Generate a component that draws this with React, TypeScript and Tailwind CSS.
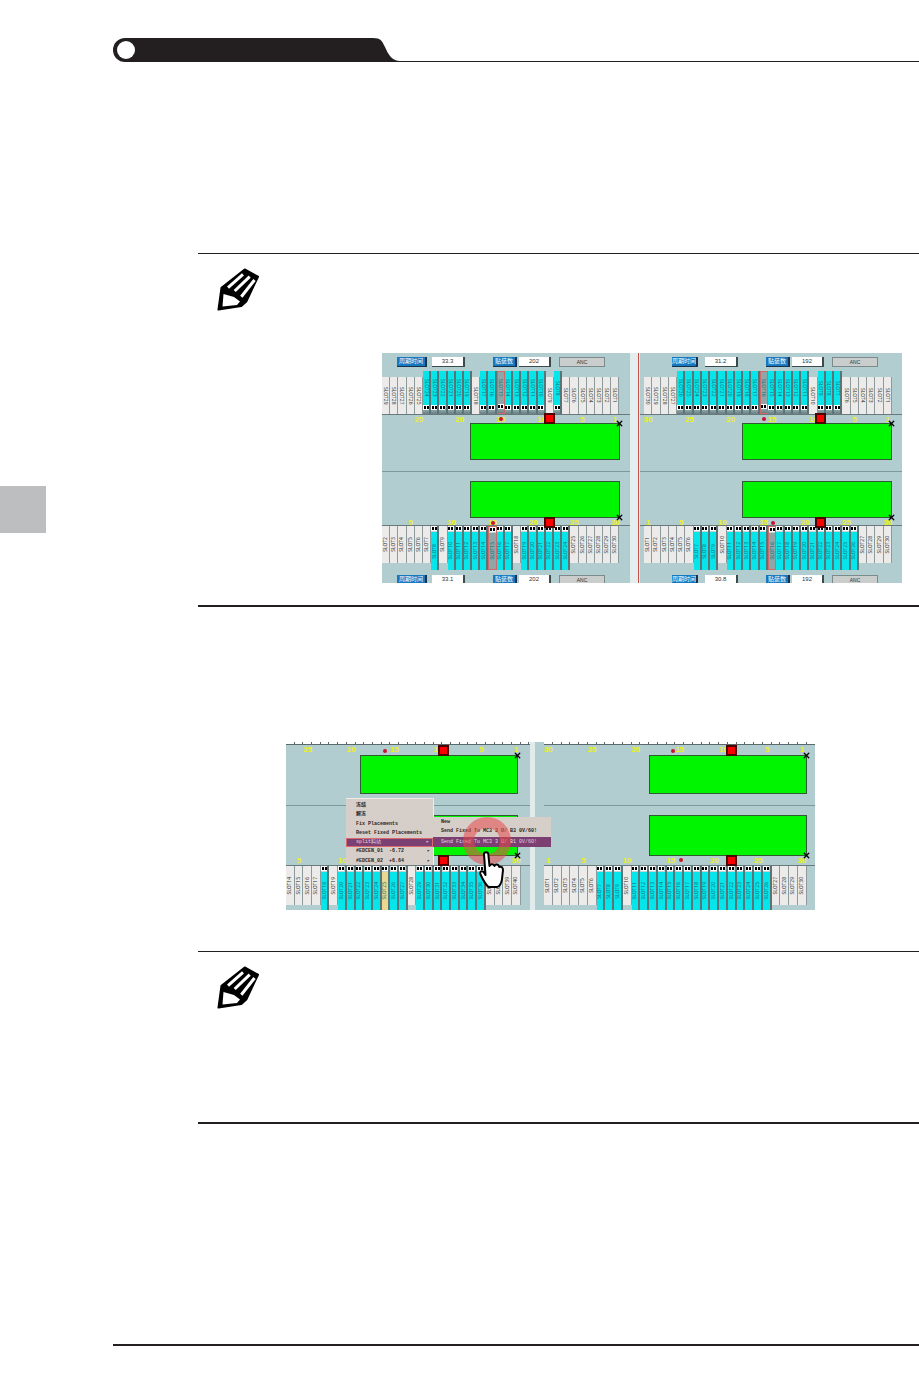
import React from 'react';
import { X } from 'lucide-react';

const CJK = "font-['Liberation_Sans','Noto_Sans_CJK_SC',sans-serif]";

// one feeder slot; top rows are flipped compared with bottom rows
const Slot: React.FC<{ kind: string; label: number; side: 'top' | 'bottom'; cell: string; tall?: boolean }> = ({ kind, label, side, cell, tall }) => {
  const isTop = side === 'top';
  const text = (
    <span className={`text-[5px] leading-none whitespace-nowrap ${kind === 'w' ? 'text-[#333]' : 'text-[#0a6f78]'} [writing-mode:vertical-rl] ${isTop ? '' : 'rotate-180'}`}>
      SLOT{label}
    </span>
  );

  if (kind === 'w') {
    return (
      <div className={`${cell} ${tall ? 'h-[39px]' : 'h-[37px]'} shrink-0 bg-[#ecebea] border-r border-[#8d9a9c] flex items-center justify-center overflow-hidden`}>
        {text}
      </div>
    );
  }

  const body = kind === 's' ? 'bg-[#8fa5a6] border border-[#cf6a6a]' : kind === 'y' ? 'bg-[#e8d890] border-r-2 border-[#5a7478]' : 'bg-[#06e6ea] border-r-2 border-[#5a7478]';
  return (
    <div className={`${cell} h-full shrink-0 ${body} flex ${isTop ? 'flex-col' : 'flex-col-reverse'} items-center justify-between overflow-hidden`}>
      <div className="flex-1 flex items-center justify-center overflow-hidden">{text}</div>
      <div className={`w-full ${isTop ? 'pb-[4px] bg-gradient-to-b from-[#b9d6d8] to-[#6b7f82]' : 'pb-[1px] bg-[#c4d4d5]'} flex justify-center`}>
        <div className="bg-white px-[0.5px] py-[1px] flex gap-[1px]">
          <div className="w-[2px] h-[3px] bg-black" />
          <div className="w-[2px] h-[3px] bg-black" />
        </div>
      </div>
    </div>
  );
};

const SlotRow: React.FC<{ slots: string; side: 'top' | 'bottom'; cell: string; height: string; labelFrom: number; labelStep: number; tall?: boolean }> = ({ slots, side, cell, height, labelFrom, labelStep, tall }) => (
  <div className={`flex ${height} ${side === 'top' ? 'items-end' : 'items-start'}`}>
    {slots.split('').map((kind, i) => (
      <Slot key={i} kind={kind} side={side} cell={cell} tall={tall} label={labelFrom + labelStep * i} />
    ))}
  </div>
);

// yellow slot numbers along the ruler; numbers under the open menu are left out
const Ruler: React.FC<{ count: number; cell: string; height: string; from: number; step: number; line: string; pad: string; covered?: number[] }> = ({ count, cell, height, from, step, line, pad, covered = [] }) => (
  <div className={`flex ${height} ${line} ${pad} border-[#69797c]`}>
    {Array.from({ length: count }).map((_, i) => {
      const n = from + step * i;
      return (
        <div key={i} className={`${cell} shrink-0 flex justify-center`}>
          {(n === 1 || n % 5 === 0) && !covered.includes(n) && (
            <span className="text-[8px] font-bold leading-[9px] text-[#eef018] font-['Liberation_Sans',sans-serif]">{n}</span>
          )}
        </div>
      );
    })}
  </div>
);

const Board: React.FC<{ size: string; square: string; dot?: string; corner: 'top' | 'bottom' }> = ({ size, square, dot, corner }) => (
  <div className={`relative ${size} bg-[#00f600] border border-[#2f5a32]`}>
    <div className={`absolute ${square} ${corner === 'top' ? 'bottom-full' : 'top-full'} w-[11px] h-[11px] bg-[#4a0505] flex items-center justify-center`}>
      <div className="w-[7px] h-[7px] bg-[#fb0000]" />
    </div>
    {dot && <div className={`absolute ${dot} w-[4px] h-[4px] rounded-full bg-[#c8142e]`} />}
    <X className={`absolute -right-[5px] ${corner === 'top' ? '-top-[5px]' : '-bottom-[5px]'} w-[9px] h-[9px] text-black`} strokeWidth={3.5} />
  </div>
);

const Toolbar: React.FC<{ offset: string; blueA: string; gapA: string; time: string; count: string }> = ({ offset, blueA, gapA, time, count }) => (
  <div className={`flex items-stretch h-[10px] ${offset} ${CJK}`}>
    <div className={`${blueA} bg-[#1678c0] border-r-2 border-b border-[#17324a] text-white text-[6px] leading-[9px] text-center overflow-hidden whitespace-nowrap`}>周期时间</div>
    <div className={`w-[33px] ${gapA} bg-white border-r-2 border-b border-[#3c4a4c] text-[6px] leading-[9px] text-center text-[#333]`}>{time}</div>
    <div className="w-[24px] ml-[28px] bg-[#1678c0] border-r-2 border-b border-[#17324a] text-white text-[6px] leading-[9px] text-center overflow-hidden whitespace-nowrap">贴装数</div>
    <div className="w-[32px] ml-[2px] bg-white border-r-2 border-b border-[#3c4a4c] text-[6px] leading-[9px] text-center text-[#333]">{count}</div>
    <div className="w-[46px] ml-[8px] bg-[#c9cdcc] border border-[#7d8a8b] text-[5px] leading-[8px] text-center text-[#333]">ANC</div>
  </div>
);

type PanelProps = {
  width: string;
  pad: string;
  offset: string;
  blueA: string;
  gapA: string;
  boardSize: string;
  cell: string;
  topSlots: string;
  bottomSlots: string;
  topFrom: number;
  bottomFrom: number;
  square: string;
  topDot: string;
  bottomDot: string;
  values: [string, string, string, string];
};

const WidePanel: React.FC<PanelProps> = (p) => (
  <div className={`${p.width} h-[230px] shrink-0 flex flex-col bg-[#b2cdd0] overflow-hidden`}>
    <div className="pt-[4px]">
      <Toolbar offset={p.offset} blueA={p.blueA} gapA={p.gapA} time={p.values[0]} count={p.values[1]} />
    </div>
    <div className={`mt-[4px] ${p.pad}`}>
      <SlotRow slots={p.topSlots} side="top" cell={p.cell} height="h-[43px]" labelFrom={p.topFrom} labelStep={-1} />
    </div>
    <Ruler count={p.topSlots.length} cell={p.cell} height="h-[9px]" from={p.topFrom} step={-1} line="border-t" pad={p.pad} />
    <div className="flex justify-end pr-[10px]">
      <Board size={p.boardSize} square={p.square} dot={p.topDot} corner="top" />
    </div>
    <div className="mt-[11px] border-t border-[#7f989b]" />
    <div className="mt-[9px] flex justify-end pr-[10px]">
      <Board size={p.boardSize} square={p.square} dot={p.bottomDot} corner="bottom" />
    </div>
    <Ruler count={p.bottomSlots.length} cell={p.cell} height="h-[8px]" from={p.bottomFrom} step={1} line="border-b" pad={p.pad} />
    <div className={p.pad}>
      <SlotRow slots={p.bottomSlots} side="bottom" cell={p.cell} height="h-[44px]" labelFrom={p.bottomFrom} labelStep={1} />
    </div>
    <div className="mt-[5px]">
      <Toolbar offset={p.offset} blueA={p.blueA} gapA={p.gapA} time={p.values[2]} count={p.values[3]} />
    </div>
  </div>
);

const CroppedPanel: React.FC<{
  width: string;
  right: string;
  cell: string;
  slots: string;
  from: number;
  labelFrom: number;
  square: string;
  topDot: string;
  bottomDot?: string;
  covered?: number[];
}> = ({ width, right, cell, slots, from, labelFrom, square, topDot, bottomDot, covered }) => (
  <div className={`${width} h-[168px] shrink-0 flex flex-col bg-[#b2cdd0] overflow-hidden`}>
    <div className="flex h-[3px] bg-white border-b border-[#5d6a6c]">
      {Array.from({ length: 30 }).map((_, i) => (
        <div key={i} className={`${cell} shrink-0 border-r border-[#5d6a6c]`} />
      ))}
    </div>
    <Ruler count={slots.length} cell={cell} height="h-[10px]" from={slots.length} step={-1} line="" pad="" />
    <div className={`flex justify-end ${right}`}>
      <Board size="w-[158px] h-[39px]" square={square} dot={topDot} corner="top" />
    </div>
    <div className="mt-[11px] border-t border-[#7f989b]" />
    <div className={`mt-[9px] flex justify-end ${right}`}>
      <Board size="w-[158px] h-[41px]" square={square} dot={bottomDot} corner="bottom" />
    </div>
    <Ruler count={slots.length} cell={cell} height="h-[10px]" from={from} step={1} line="border-b" pad="" covered={covered} />
    <SlotRow slots={slots} side="bottom" cell={cell} height="h-[44px]" labelFrom={labelFrom} labelStep={1} tall />
  </div>
);

// the context menu shown over the lower board
const ContextMenu: React.FC = () => {
  const row = 'h-[9.3px] pl-[10px] leading-[9.3px] whitespace-nowrap';
  return (
    <div className="absolute left-[60px] top-[56px] w-[88px] h-[67px] bg-[#d6cfc9] border-t border-r border-[#f1ece7] text-[5px] font-bold text-[#2a2522] font-['Liberation_Mono','Noto_Sans_CJK_SC',monospace]">
      <div className="pt-[2px]">
        <div className={row}>冻结</div>
        <div className={row}>解冻</div>
        <div className={row}>Fix Placements</div>
        <div className={row}>Reset Fixed Placements</div>
        <div className="h-[9.3px] leading-[7.3px] pl-[9px] pr-[3px] flex justify-between whitespace-nowrap bg-[#7b3f72] border border-[#d8676e] text-[#e6d6e0] font-normal">
          <span>split料站</span>
          <span>▸</span>
        </div>
        <div className={`${row} flex justify-between pr-[3px]`}>
          <span>#EDCEN_01&nbsp;&nbsp;-6.72</span>
          <span>▸</span>
        </div>
        <div className={`${row} flex justify-between pr-[3px]`}>
          <span>#EDCEN_02&nbsp;&nbsp;+6.64</span>
          <span>▸</span>
        </div>
      </div>
      <div className="absolute left-full top-[18px] w-[118px] h-[30px] bg-[#d6cfc9] font-bold">
        <div className="h-[9.4px] pl-[8px] leading-[11px]">New</div>
        <div className="h-[9.4px] pl-[8px] leading-[11px] whitespace-nowrap">Send Fixed To MC3 3 U/ B3 0V/60!</div>
        <div className="h-[10px] pl-[8px] leading-[10px] mt-[1px] whitespace-nowrap bg-[#7b3f72] text-[#e6d6e0] font-normal">Send Fixed To MC3 3 U/ B1 0V/60!</div>
      </div>
    </div>
  );
};

const Hand: React.FC = () => (
  <svg className="absolute left-[193px] top-[109px] w-[25px] h-[37px]" viewBox="0 0 25 37">
    <path
      d="M5 3C5 0.5 9 0.5 9.3 3L10.5 15C11.5 12.5 14.5 12.5 15.5 15C16.5 12.5 19.5 13 20.3 16C22 15 24 16.5 24 19L23 28C22.5 32 20.5 36 18 36L9.5 36C7 34 4.5 30 1.5 23.5C0.3 20.5 3.2 19 5 21.5L6.5 24Z"
      fill="white"
      stroke="black"
      strokeWidth="2"
      strokeLinejoin="round"
    />
  </svg>
);

const Pencil: React.FC = () => (
  <svg className="w-[45px] h-[45px]" viewBox="0 0 45 45">
    <path d="M1.5 41.5L4.5 19.7L27.7 1.5L41 8.7L29.3 33.5L24.3 38Z" fill="black" stroke="black" strokeWidth="2" strokeLinejoin="round" />
    <path d="M6.5 26L17 29L23 33.5L20 37L5.5 38.5Z" fill="white" />
    <path d="M11 19.7L26 6.3M17.7 23L32.7 8.7M24.3 28.7L37.5 12" stroke="white" strokeWidth="3" fill="none" />
  </svg>
);

const TOP_LEFT = 'wwwwwccccccwccscccccwcwwwwwww';
const BOTTOM_LEFT = 'wwwwwwcwcccccsccwccccccwwwwww';
const TOP_RIGHT = 'wwwwccccccccccscccccwcccwwwwww';
const BOTTOM_RIGHT = 'wwwwwwcccwcccccsccccccccccwwww';
const MENU_LEFT = 'wwwwcwcccccyccwccccccccwwww';
const MENU_RIGHT = 'wwwwwwcccwccccccccccccccccwwww';

export default function App() {
  return (
    <div className="w-[919px] h-[1373px] bg-white flex overflow-hidden">
      {/* chapter tab on the page edge */}
      <div className="w-[46px] shrink-0 pt-[486px]">
        <div className="h-[47px] bg-[#bcbec0]" />
      </div>

      <div className="flex-1 pl-[67px]">
        {/* running head */}
        <div className="mt-[38px] flex items-end h-[24px]">
          <div className="w-[260px] h-[24px] rounded-l-full bg-[#231f20] flex items-center pl-[4px]">
            <div className="w-[18px] h-[18px] rounded-full bg-white" />
          </div>
          <svg className="w-[27px] h-[24px] shrink-0" viewBox="0 0 27 24">
            <path d="M0 0C8 0 9 3 12 9C15 16 19 23 27 23L27 24L0 24Z" fill="#231f20" />
          </svg>
          <div className="flex-1 border-b border-[#231f20]" />
        </div>

        {/* first note */}
        <div className="mt-[191px] ml-[85px] border-t border-b-2 border-[#231f20] pt-[14px] pb-[22px]">
          <div className="ml-[19px]">
            <Pencil />
          </div>
          <div className="mt-[40px] ml-[184px] flex">
            <WidePanel
              width="w-[248px]"
              pad=""
              offset="ml-[15px]"
              blueA="w-[30px]"
              gapA="ml-[5px]"
              boardSize="w-[150px] h-[37px]"
              cell="w-[8.2px]"
              topSlots={TOP_LEFT}
              bottomSlots={BOTTOM_LEFT}
              topFrom={29}
              bottomFrom={2}
              square="left-[73px]"
              topDot="left-[28px] -top-[7px]"
              bottomDot="left-[20px] top-[calc(100%+4px)]"
              values={['33.3', '202', '33.1', '202']}
            />
            <div className="w-[10px] shrink-0 flex bg-[#e4eeee]">
              <div className="flex-1" />
              <div className="w-[1px] bg-[#c4504a] mr-[1px]" />
            </div>
            <WidePanel
              width="w-[262px]"
              pad="pl-[4px]"
              offset="ml-[32px]"
              blueA="w-[26px]"
              gapA="ml-[7px]"
              boardSize="w-[150px] h-[37px]"
              cell="w-[8.27px]"
              topSlots={TOP_RIGHT}
              bottomSlots={BOTTOM_RIGHT}
              topFrom={30}
              bottomFrom={1}
              square="left-[72px]"
              topDot="left-[19px] -top-[7px]"
              bottomDot="left-[28px] top-[calc(100%+4px)]"
              values={['31.2', '192', '30.8', '192']}
            />
          </div>
        </div>

        {/* screen with the open menu */}
        <div className="relative mt-[135px] ml-[173px] w-[529px] flex">
          <CroppedPanel
            width="w-[244px]"
            right="pr-[12px]"
            cell="w-[8.7px]"
            slots={MENU_LEFT}
            from={4}
            labelFrom={14}
            square="left-[77px]"
            topDot="left-[22px] -top-[7px]"
            covered={[15, 20, 25]}
          />
          <div className="w-[14px] shrink-0 flex bg-[#b2cdd0]">
            <div className="w-[5px] bg-[#e2ebeb]" />
          </div>
          <CroppedPanel
            width="w-[271px]"
            right="pr-[8px]"
            cell="w-[8.75px]"
            slots={MENU_RIGHT}
            from={1}
            labelFrom={1}
            square="left-[76px]"
            topDot="left-[21px] -top-[7px]"
            bottomDot="left-[29px] top-[calc(100%+3px)]"
          />
          <ContextMenu />
          <div className="absolute left-[177px] top-[75px] w-[48px] h-[48px] rounded-full border-[11px] border-[#e84a4a]/55" />
          <Hand />
        </div>

        {/* second note */}
        <div className="mt-[41px] ml-[85px] h-[173px] border-t border-b-2 border-[#231f20] pt-[14px]">
          <div className="ml-[19px]">
            <Pencil />
          </div>
        </div>

        {/* page foot */}
        <div className="mt-[220px] border-t-2 border-[#231f20]" />
      </div>
    </div>
  );
}
